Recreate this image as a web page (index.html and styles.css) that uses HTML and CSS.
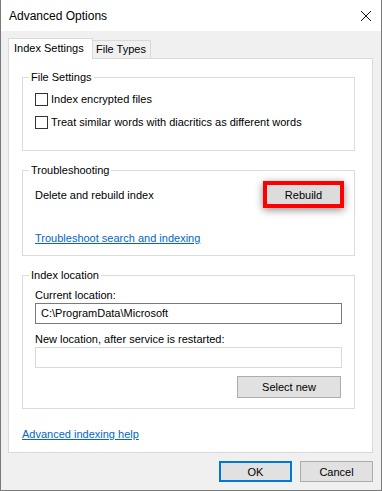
FILE: index.html
```html
<!DOCTYPE html>
<html lang="en">
<head>
  <meta charset="UTF-8" />
  <title>Advanced Options</title>
  <link rel="stylesheet" href="styles.css">
</head>
<body>
  <div class="window">
    <div class="titlebar">
      <span class="title">Advanced Options</span>
      <svg class="close" width="12" height="12" viewBox="0 0 12 12">
        <path d="M1 1 L11 11 M11 1 L1 11" stroke="#111" stroke-width="1" fill="none" />
      </svg>
    </div>

    <div class="content">
      <div class="tabs">
        <div class="tab active">Index Settings</div>
        <div class="tab">File Types</div>
      </div>

      <div class="panel">
        <!-- File Settings -->
        <div class="group settings">
          <div class="group-title">File Settings</div>
          <div class="check-row first">
            <span class="checkbox"></span>
            <span>Index encrypted files</span>
          </div>
          <div class="check-row">
            <span class="checkbox"></span>
            <span>Treat similar words with diacritics as different words</span>
          </div>
        </div>

        <!-- Troubleshooting -->
        <div class="group trouble">
          <div class="group-title">Troubleshooting</div>
          <div class="rebuild-row">
            <span>Delete and rebuild index</span>
            <span class="highlight"><button class="btn rebuild">Rebuild</button></span>
          </div>
          <a class="link trouble-link" href="#">Troubleshoot search and indexing</a>
        </div>

        <!-- Index location -->
        <div class="group location">
          <div class="group-title">Index location</div>
          <div class="field-label first">Current location:</div>
          <div class="textbox">C:\ProgramData\Microsoft</div>
          <div class="field-label">New location, after service is restarted:</div>
          <div class="textbox disabled"></div>
          <div class="select-row">
            <button class="btn select-new">Select new</button>
          </div>
        </div>

        <a class="link help-link" href="#">Advanced indexing help</a>
      </div>

      <div class="footer">
        <button class="btn dialog-btn default">OK</button>
        <button class="btn dialog-btn">Cancel</button>
      </div>
    </div>
  </div>
</body>
</html>
```

FILE: styles.css
```css
body {
  margin: 0;
  font-family: "Liberation Sans", Arial, sans-serif;
  font-size: 11px;
  color: #000;
  background: #f0f0f0;
}

.window {
  height: 491px;
  box-sizing: border-box;
  border: 1px solid #7a7a7a;
  border-top: none;
  background: #f0f0f0;
  display: flex;
  flex-direction: column;
}

.titlebar {
  height: 31px;
  flex: none;
  background: #fff;
  display: flex;
  align-items: center;
  justify-content: space-between;
  padding: 0 9px 0 8px;
}

.title {
  font-size: 12px;
}

.close {
  display: block;
  margin-top: 1px;
}

.content {
  padding: 7px 8px 0 7px;
}

.tabs {
  display: flex;
  align-items: flex-end;
  height: 20px;
}

.tab {
  box-sizing: border-box;
  height: 18px;
  line-height: 16px;
  white-space: nowrap;
  border: 1px solid #d9d9d9;
  border-left: none;
  border-bottom: none;
  padding: 0 4px 0 3px;
  background: #f0f0f0;
}

.tab.active {
  height: 21px;
  width: 85px;
  line-height: 19px;
  border-left: 1px solid #d9d9d9;
  background: #fff;
  padding-left: 5px;
  margin-bottom: -1px;
  position: relative;
  z-index: 1;
}

.panel {
  box-sizing: border-box;
  height: 395px;
  background: #fff;
  border: 1px solid #d9d9d9;
  padding: 18px 0 0 13px;
}

/* group box: title sits on the top border */
.group {
  box-sizing: border-box;
  width: 333px;
  border: 1px solid #dcdcdc;
  padding: 0 10px 0 12px;
  margin-bottom: 19px;
}

.group-title {
  width: fit-content;
  line-height: 16px;
  height: 16px;
  margin: -9px 0 0 -6px;
  padding: 0 2px;
  background: #fff;
}

.settings {
  height: 74px;
}

.check-row {
  display: flex;
  align-items: center;
  height: 16px;
  margin-top: 7px;
}

.check-row.first {
  margin-top: 6px;
}

.checkbox {
  flex: none;
  width: 11px;
  height: 11px;
  border: 1px solid #333;
  background: #fff;
  margin-right: 3px;
}

.trouble {
  height: 86px;
}

.rebuild-row {
  display: flex;
  align-items: center;
  justify-content: space-between;
  margin-top: 3px;
}

.highlight {
  display: flex;
  border: 4px solid #ff0000;
  box-shadow: 0 2px 8px rgba(0, 0, 0, 0.45);
}

.btn {
  font-family: inherit;
  font-size: 11px;
  color: #000;
  background: #e1e1e1;
  border: 1px solid #adadad;
  padding: 0;
  margin: 0;
}

.rebuild {
  width: 73px;
  height: 19px;
  border: none;
  background: #dcdcdc;
}

.link {
  color: #0066cc;
  text-decoration: underline;
}

.trouble-link {
  display: inline-block;
  margin-top: 22px;
  line-height: 16px;
}

.location {
  height: 134px;
  margin-bottom: 0;
}

.field-label {
  line-height: 16px;
  margin-top: 7px;
}

.field-label.first {
  margin-top: 4px;
}

.textbox {
  box-sizing: border-box;
  width: 307px;
  height: 21px;
  border: 1px solid #7a7a7a;
  background: #fff;
  padding: 0 5px;
  line-height: 19px;
}

.textbox.disabled {
  border-color: #d9d9d9;
}

.select-row {
  display: flex;
  justify-content: flex-end;
  width: 306px;
  margin-top: 8px;
}

.select-new {
  width: 104px;
  height: 22px;
}

.help-link {
  display: inline-block;
  margin: 17px 0 0 0;
  line-height: 16px;
}

.footer {
  display: flex;
  justify-content: flex-end;
  gap: 8px;
  margin-top: 8px;
}

.dialog-btn {
  width: 73px;
  height: 21px;
}

.dialog-btn.default {
  border: 2px solid #0078d7;
}
```
